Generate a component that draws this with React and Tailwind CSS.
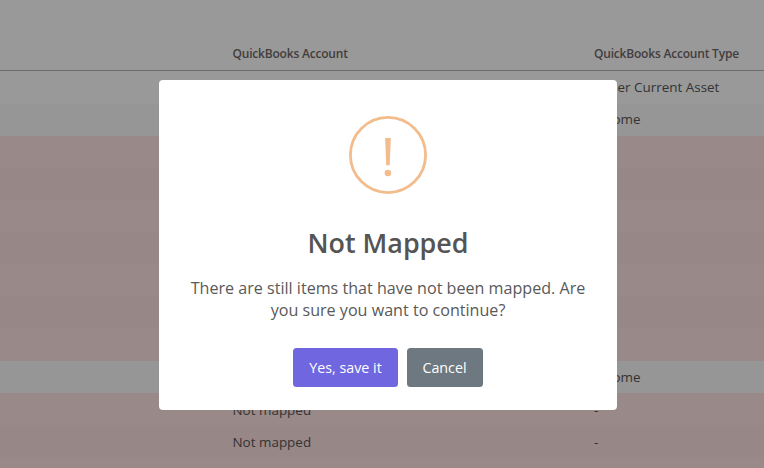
const rows = [
  { account: "", type: "Other Current Asset", tone: "h-[33px] bg-[#999999] pb-px" },
  { account: "", type: "Income", tone: "h-8 bg-[#969696] pb-0.5" },
  { account: "", type: "", tone: "h-8 bg-[#998988]" },
  { account: "", type: "", tone: "h-8 bg-[#978786]" },
  { account: "", type: "", tone: "h-8 bg-[#998988]" },
  { account: "", type: "", tone: "h-8 bg-[#978786]" },
  { account: "", type: "", tone: "h-8 bg-[#998988]" },
  { account: "", type: "", tone: "h-8 bg-[#978786]" },
  { account: "", type: "", tone: "h-[33px] bg-[#998988]" },
  { account: "", type: "Income", tone: "h-8 bg-[#959695]" },
  { account: "Not mapped", type: "-", tone: "h-8 bg-[#998988] pt-0.5" },
  { account: "Not mapped", type: "-", tone: "h-8 bg-[#978786] pt-0.5" },
  { account: "", type: "", tone: "h-8 bg-[#998988]" },
];

function MappingTable() {
  return (
    <div className="text-[13.44px] leading-5 text-[#333333]">
      <div className="flex h-[71px] items-end border-b border-[#6b6b6b] bg-[#999999] pb-[7px] pl-[232.5px] text-[12px] leading-[18px] font-semibold tracking-[-0.2px] text-[#433d3d]">
        <div className="w-[361.5px]">QuickBooks Account</div>
        <div>QuickBooks Account Type</div>
      </div>
      {rows.map((row, i) => (
        <div key={i} className={`flex items-center pl-[232.5px] ${row.tone}`}>
          <div className="w-[361.5px]">{row.account}</div>
          <div>{row.type}</div>
        </div>
      ))}
    </div>
  );
}

function WarningIcon() {
  return (
    <svg className="h-[78px] w-[78px]" viewBox="0 0 78 78" fill="#f2bc8d">
      <circle cx="39" cy="39" r="37.6" fill="none" stroke="#f2bc8d" strokeWidth="2.8" />
      <path d="M36.1 22H41.8L40.7 49.3H37.2Z" />
      <circle cx="38.9" cy="57" r="3.3" />
    </svg>
  );
}

export default function App() {
  return (
    <div className="relative h-[468px] w-[764px] overflow-hidden font-['Open_Sans',sans-serif]">
      <MappingTable />
      <div
        role="dialog"
        className="absolute top-20 left-[159px] flex h-[330px] w-[458px] flex-col items-center rounded-[4px] bg-white pt-9"
      >
        <WarningIcon />
        <h2 className="mt-[29px] text-[26.9px] leading-10 font-semibold text-[#545454]">Not Mapped</h2>
        <p className="mt-[14px] w-[410px] text-center text-[16.13px] leading-[22px] text-[#595959]">
          There are still items that have not been mapped. Are you sure you want to continue?
        </p>
        <div className="mt-[27px] flex gap-[9px] text-[14.3px] text-white">
          <button className="h-[39px] w-[105px] rounded-[3.5px] bg-[#7066e0]">Yes, save it</button>
          <button className="h-[39px] w-[76px] rounded-[3.5px] bg-[#6e7881] pr-px">Cancel</button>
        </div>
      </div>
    </div>
  );
}
